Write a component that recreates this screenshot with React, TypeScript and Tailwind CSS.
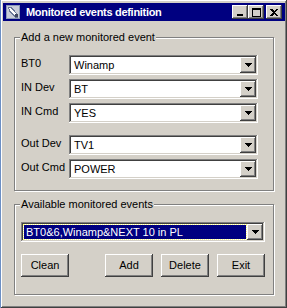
import React from 'react';

const raised =
  'shadow-[inset_-1px_-1px_#404040,inset_1px_1px_#ffffff,inset_-2px_-2px_#808080,inset_2px_2px_#d4d0c8]';
const sunken =
  'shadow-[inset_-1px_-1px_#ffffff,inset_1px_1px_#808080,inset_-2px_-2px_#d4d0c8,inset_2px_2px_#404040]';

function DownArrow() {
  return (
    <svg width="7" height="4" viewBox="0 0 7 4" shapeRendering="crispEdges">
      <rect x="0" y="0" width="7" height="1" fill="#000" />
      <rect x="1" y="1" width="5" height="1" fill="#000" />
      <rect x="2" y="2" width="3" height="1" fill="#000" />
      <rect x="3" y="3" width="1" height="1" fill="#000" />
    </svg>
  );
}

function Combo({ value, selected, className = '' }: { value: string; selected?: boolean; className?: string }) {
  return (
    <div className={`flex h-[20px] bg-white p-[2px] ${sunken} ${className}`}>
      <div className="flex flex-1 items-center pl-[1px] pr-[1px]">
        {selected ? (
          <div className="flex h-[14px] flex-1 items-center bg-[#000080] outline outline-1 outline-dotted outline-[#ffff80] pl-[2px] text-white">
            {value}
          </div>
        ) : (
          <span className="pl-[2px]">{value}</span>
        )}
      </div>
      <div className={`flex w-[16px] items-center justify-center bg-[#d4d0c8] ${raised}`}>
        <DownArrow />
      </div>
    </div>
  );
}

function Group({ title, className = '', children }: { title: string; className?: string; children: React.ReactNode }) {
  return (
    <div
      className={`relative border border-[#808080] shadow-[1px_1px_0_#ffffff,inset_1px_1px_0_#ffffff] ${className}`}
    >
      <span className="absolute left-[5px] top-[-8px] bg-[#d4d0c8] px-[1px] leading-[14px]">{title}</span>
      {children}
    </div>
  );
}

function Button({ label }: { label: string }) {
  return (
    <button className={`flex h-[23px] w-[48px] items-center justify-center bg-[#d4d0c8] ${raised}`}>
      {label}
    </button>
  );
}

function CaptionButton({ children, className = '' }: { children: React.ReactNode; className?: string }) {
  return (
    <div className={`flex h-[14px] w-[16px] items-center justify-center bg-[#d4d0c8] ${raised} ${className}`}>
      {children}
    </div>
  );
}

function AppIcon() {
  return (
    <svg width="16" height="16" viewBox="0 0 16 16" shapeRendering="crispEdges">
      <rect x="1" y="1" width="14" height="14" fill="#8a9ab8" />
      <rect x="2" y="2" width="12" height="12" fill="#c8ccd8" />
      <path d="M3 3h4l6 8v3h-3L4 7z" fill="#6a7898" />
      <path d="M4 4h2l6 7v2h-1L5 6z" fill="#ffffff" />
      <rect x="10" y="10" width="3" height="3" fill="#404860" />
    </svg>
  );
}

const rows = [
  { label: 'BT0', value: 'Winamp' },
  { label: 'IN Dev', value: 'BT' },
  { label: 'IN Cmd', value: 'YES' },
];
const outRows = [
  { label: 'Out Dev', value: 'TV1' },
  { label: 'Out Cmd', value: 'POWER' },
];

export default function App() {
  return (
    <div className="h-[308px] w-[287px] bg-[#3a6ea5] font-['Liberation_Sans',Arial,sans-serif] text-[11px] text-black">
      <div className="flex h-full flex-col border-l border-[#6d8fc4] bg-[#d4d0c8] shadow-[inset_-1px_-1px_#404040,inset_1px_1px_#ffffff,inset_-2px_-2px_#808080]">
        {/* Title bar */}
        <div className="mx-[2px] mt-[3px] flex h-[18px] items-center bg-[#000080] pl-[2px] pr-[3px]">
          <AppIcon />
          <span className="ml-[5px] flex-1 text-[11px] font-bold leading-none tracking-[-0.3px] text-white">
            Monitored events definition
          </span>
          <CaptionButton>
            <svg width="8" height="7" viewBox="0 0 8 7" shapeRendering="crispEdges">
              <rect x="1" y="5" width="6" height="2" fill="#000" />
            </svg>
          </CaptionButton>
          <CaptionButton>
            <svg width="9" height="9" viewBox="0 0 9 9" shapeRendering="crispEdges">
              <rect x="0" y="0" width="9" height="2" fill="#000" />
              <rect x="0" y="0" width="1" height="9" fill="#000" />
              <rect x="8" y="0" width="1" height="9" fill="#000" />
              <rect x="0" y="8" width="9" height="1" fill="#000" />
            </svg>
          </CaptionButton>
          <CaptionButton className="ml-[2px]">
            <svg width="8" height="7" viewBox="0 0 8 7" shapeRendering="crispEdges">
              <path d="M0 0h2l2 2 2-2h2v1L5 3.5 8 6v1H6L4 5 2 7H0V6l3-2.5L0 1z" fill="#000" />
            </svg>
          </CaptionButton>
        </div>

        <div className="flex flex-col px-[13px] pt-[16px]">
          <Group title="Add a new monitored event" className="pb-[11px] pl-[6px] pr-[15px] pt-[17px]">
            <div className="flex flex-col gap-[4px]">
              {rows.map((r) => (
                <div key={r.label} className="flex items-start">
                  <span className="w-[48px] leading-[16px]">{r.label}</span>
                  <Combo value={r.value} className="flex-1" />
                </div>
              ))}
            </div>
            <div className="mt-[12px] flex flex-col gap-[4px]">
              {outRows.map((r) => (
                <div key={r.label} className="flex items-start">
                  <span className="w-[48px] leading-[16px]">{r.label}</span>
                  <Combo value={r.value} className="flex-1" />
                </div>
              ))}
            </div>
          </Group>

          <Group title="Available monitored events" className="mt-[13px] pb-[17px] pl-[6px] pr-[8px] pt-[17px]">
            <Combo value="BT0&6,Winamp&NEXT 10 in PL" selected />
            <div className="mt-[12px] flex">
              <Button label="Clean" />
              <div className="flex-1" />
              <div className="flex gap-[8px]">
                <Button label="Add" />
                <Button label="Delete" />
                <Button label="Exit" />
              </div>
            </div>
          </Group>
        </div>
      </div>
    </div>
  );
}
